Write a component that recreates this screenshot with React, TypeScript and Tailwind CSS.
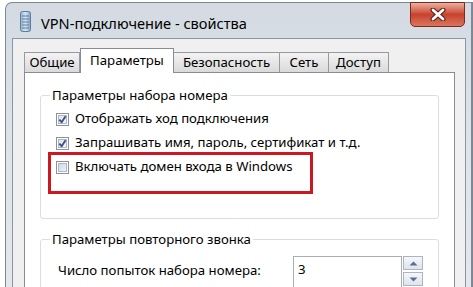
function Check({ checked }: { checked: boolean }) {
  return (
    <svg width="13" height="13" viewBox="0 0 13 13" className="shrink-0">
      <defs>
        <linearGradient id={checked ? 'cbOn' : 'cbOff'} x1="0" y1="0" x2="1" y2="1">
          <stop offset="0" stopColor={checked ? '#dfe3e8' : '#c9d9ea'} />
          <stop offset="1" stopColor={checked ? '#f6f7f9' : '#eef4fa'} />
        </linearGradient>
      </defs>
      <rect x="0.5" y="0.5" width="12" height="12" fill="#fff" stroke="#8e9196" />
      <rect x="2.5" y="2.5" width="8" height="8" fill={`url(#${checked ? 'cbOn' : 'cbOff'})`} stroke="#aeb8c4" />
      {checked && (
        <path d="M3.4 6.6 L5.6 9.2 L9.6 3.2" fill="none" stroke="#3c4f8e" strokeWidth="1.9" strokeLinejoin="round" />
      )}
    </svg>
  )
}

function Tab({ label, w, active }: { label: string; w: string; active?: boolean }) {
  if (active) {
    return (
      <div
        className={`${w} h-[25px] -mb-px relative z-10 bg-white border border-b-0 border-[#898c95] flex items-start justify-center pt-[2px] text-[13.2px]`}
      >
        {label}
      </div>
    )
  }
  return (
    <div
      className={`${w} h-[20px] bg-gradient-to-b from-[#f3f3f3] to-[#dadada] border border-b-0 border-[#989aa2] -ml-px first:ml-0 flex items-center justify-center text-[13.2px]`}
    >
      {label}
    </div>
  )
}

function Spin() {
  return (
    <div className="flex flex-col gap-[2px] ml-px">
      <div className="w-[20px] h-[14px] border border-[#aab4c2] bg-gradient-to-b from-[#f5f7fa] to-[#dfe5ec] flex items-center justify-center">
        <svg width="9" height="5" viewBox="0 0 9 5">
          <path d="M0.5 4.5 L4.5 0.5 L8.5 4.5 Z" fill="#5c6e90" />
        </svg>
      </div>
      <div className="w-[20px] h-[14px] border border-[#aab4c2] bg-gradient-to-b from-[#f5f7fa] to-[#dfe5ec] flex items-center justify-center">
        <svg width="9" height="5" viewBox="0 0 9 5">
          <path d="M0.5 0.5 L4.5 4.5 L8.5 0.5 Z" fill="#5c6e90" />
        </svg>
      </div>
    </div>
  )
}

export default function App() {
  return (
    <div className='w-[473px] h-[287px] overflow-hidden bg-white relative font-["Noto_Sans",sans-serif] text-black'>
      <div className="ml-[5px] mt-[2px] w-[468px] h-[300px] border-l border-t border-r-2 border-[#7d8894] rounded-tl-[7px] bg-gradient-to-b from-[#d3dae1] via-[#dfe4e9] to-[#e4e8ec]">
        {/* title bar */}
        <div className="h-[35px] flex items-start">
          <svg width="11" height="21" viewBox="0 0 11 21" className="ml-[14px] mt-[8px]">
            <defs>
              <linearGradient id="tower" x1="0" y1="0" x2="1" y2="0">
                <stop offset="0" stopColor="#8fb0cf" />
                <stop offset="0.5" stopColor="#d8e6f3" />
                <stop offset="1" stopColor="#7f9fbf" />
              </linearGradient>
            </defs>
            <rect x="0.5" y="0.5" width="10" height="20" rx="2" fill="url(#tower)" stroke="#5e7d9c" />
            <path d="M2 5h7M2 8h7M2 11h7M2 14h7M2 17h7" stroke="#5f7fa0" strokeWidth="1" />
          </svg>
          <span className="ml-[10px] mt-[11px] text-[14.6px] leading-[18px]">VPN-подключение - свойства</span>
          <div className="ml-auto mr-[6px] -mt-px w-[55px] h-[25px] rounded-b-[5px] border border-[#7a2a22] bg-gradient-to-b from-[#eab0a0] via-[#c8402e] to-[#d9765e] flex items-center justify-center">
            <svg width="16" height="13" viewBox="0 0 16 13">
              <path d="M3 2 L13 11 M13 2 L3 11" stroke="#5a1f18" strokeWidth="5" strokeLinecap="round" />
              <path d="M3 2 L13 11 M13 2 L3 11" stroke="#ffffff" strokeWidth="2.8" strokeLinecap="round" />
            </svg>
          </div>
        </div>

        {/* client area */}
        <div className="ml-[6px] w-[454px] h-[260px] border border-[#8996a5] bg-[#f0f0f0] pt-[9px] pl-[11px] pr-[10px]">
          <div className="flex items-end h-[24px]">
            <Tab label="Общие" w="w-[56px]" />
            <Tab label="Параметры" w="w-[94px]" active />
            <Tab label="Безопасность" w="w-[107px]" />
            <Tab label="Сеть" w="w-[50px]" />
            <Tab label="Доступ" w="w-[61px]" />
          </div>

          <div className="h-[230px] bg-white border border-[#898c95] px-[15px] text-[13.2px]">
            <fieldset className="mt-[13px] border border-[#d5dfe5] rounded-[3px] pb-[39px]">
              <legend className="ml-[9px] px-[2px] leading-[18px]">Параметры набора номера</legend>
              <div className="pt-[3px] pl-[15px]">
                <div className="h-[24px] flex items-center gap-[6px]">
                  <Check checked />
                  <span>Отображать ход подключения</span>
                </div>
                <div className="h-[24px] flex items-center gap-[6px]">
                  <Check checked />
                  <span>Запрашивать имя, пароль, сертификат и т.д.</span>
                </div>
                <div className="h-[24px] flex items-center gap-[6px]">
                  <Check checked={false} />
                  <span>Включать домен входа в Windows</span>
                </div>
              </div>
            </fieldset>

            <fieldset className="mt-[11px] border border-[#d5dfe5] rounded-[3px] h-[80px]">
              <legend className="ml-[9px] px-[2px] leading-[18px]">Параметры повторного звонка</legend>
              <div className="pt-[8px] pl-[17px] flex items-start">
                <span className="w-[235px] mt-[5px]">Число попыток набора номера:</span>
                <div className="w-[109px] h-[32px] border border-[#abadb3] pl-[4px] pt-[3px]">3</div>
                <Spin />
              </div>
            </fieldset>
          </div>
        </div>
      </div>

      {/* red highlight annotation */}
      <div className="absolute left-[48px] top-[152px] w-[265px] h-[42px] border-[3px] border-[#cc1820]" />
    </div>
  )
}
